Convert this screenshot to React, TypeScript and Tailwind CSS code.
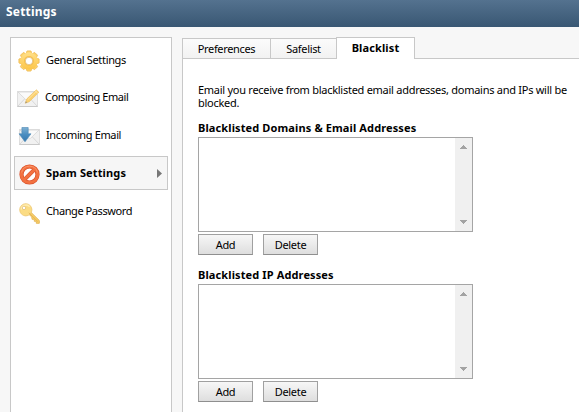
import type { ReactNode } from "react";

function GearIcon() {
  const teeth = [0, 45, 90, 135, 180, 225, 270, 315];
  return (
    <svg width="22" height="22" viewBox="0 0 22 22">
      <defs>
        <linearGradient id="gear" x1="0" y1="0" x2="0" y2="1">
          <stop offset="0" stopColor="#ffe08a" />
          <stop offset="1" stopColor="#fcc548" />
        </linearGradient>
      </defs>
      <g fill="#fcd168" stroke="#efbb58" strokeWidth="0.8" strokeLinejoin="round">
        {teeth.map((a) => (
          <path key={a} d="M8.2 4 8.8 1.3q.1-.4.5-.4h3.4q.4 0 .5.4L13.8 4z" transform={`rotate(${a} 11 11)`} />
        ))}
      </g>
      <circle cx="11" cy="11" r="8.7" fill="url(#gear)" />
      <circle cx="11" cy="11" r="5" fill="#f9c14c" />
      <circle cx="11" cy="11" r="3.7" fill="#fff" stroke="#d9b26a" strokeWidth="0.6" />
    </svg>
  );
}

function Envelope() {
  return (
    <g>
      <rect x=".5" y="2.5" width="20" height="15" fill="#f1f1f1" stroke="#dedede" />
      <path d="M1 17 8 9.5M20 17l-7-7.5" stroke="#d8d8d8" fill="none" />
      <path d="M1 3h19l-8.3 8.2q-1.2 1-2.4 0z" fill="#fafafa" stroke="#d6d6d6" strokeWidth=".8" />
      <path d="M.5 17.5h20" stroke="#c9c9c9" />
    </g>
  );
}

function ComposeIcon() {
  return (
    <svg width="23" height="19" viewBox="0 0 23 19">
      <Envelope />
      <path d="m8.2 14.3 1.4-4.2L19.3.8l2.6 2.5-9.6 9.4z" fill="#fad06f" stroke="#ecbd62" strokeWidth=".6" />
      <path d="m10.7 10.7 8.8-8.5" stroke="#ffe5a4" />
      <path d="m8.2 14.3.7-2.1 1.3 1.4z" fill="#9a9283" />
      <path d="m18.2 1.8 2.6 2.5" stroke="#fff1c6" strokeWidth=".8" />
    </svg>
  );
}

function IncomingIcon() {
  return (
    <svg width="22" height="19" viewBox="0 0 22 19">
      <defs>
        <linearGradient id="arrow" x1="0" y1="0" x2="0" y2="1">
          <stop offset="0" stopColor="#7db0d3" />
          <stop offset=".5" stopColor="#4a8dc0" />
          <stop offset="1" stopColor="#3578ae" />
        </linearGradient>
      </defs>
      <g transform="translate(1 0)">
        <Envelope />
      </g>
      <path d="M3.9.5h6.3v6.3H13l-6 8-6-8h2.9z" fill="url(#arrow)" stroke="#4a86b4" strokeWidth=".6" />
    </svg>
  );
}

function BlockIcon() {
  return (
    <svg width="21" height="21" viewBox="0 0 21 21">
      <circle cx="10.5" cy="10.5" r="8" fill="#fff" stroke="#d9512c" strokeWidth="4.2" />
      <path d="m4.7 16.3 11.6-11.6" stroke="#d9512c" strokeWidth="4" />
      <circle cx="10.5" cy="10.5" r="8.1" fill="none" stroke="#f27140" strokeWidth="3" />
      <path d="m5 16 11-11" stroke="#f27140" strokeWidth="2.8" />
      <path d="M2.6 8.5a8.1 8.1 0 0 1 15.8 0" fill="none" stroke="#fb9468" strokeWidth="1" />
    </svg>
  );
}

function KeyIcon() {
  return (
    <svg width="21" height="21" viewBox="0 0 21 21">
      <path d="m10.1 7.5 10.2 10v2.8h-3v-2h-2v-2h-2.2l-.3-2.3-4-3.7z" fill="#f9cf68" stroke="#e3b556" strokeWidth=".9" />
      <circle cx="6.8" cy="6.8" r="6.1" fill="#fbdc84" stroke="#edc670" strokeWidth=".8" />
      <path d="M2.2 6.5a4.8 4.8 0 0 1 8.5-2.7" fill="none" stroke="#ffedb1" strokeWidth="1.4" />
      <circle cx="5" cy="4.9" r="1.7" fill="#fff" stroke="#dcb970" strokeWidth=".7" />
      <path d="m9.8 9.8 9 8.7" stroke="#dfab48" strokeWidth=".7" />
    </svg>
  );
}

type Item = { label: string; icon: ReactNode; iconPad: string; textStyle: string; selected?: boolean };

const items: Item[] = [
  { label: "General Settings", icon: <GearIcon />, iconPad: "pl-[3px] pt-[7px]", textStyle: "pt-[9px]" },
  { label: "Composing Email", icon: <ComposeIcon />, iconPad: "pl-[2px] pt-[8px]", textStyle: "-ml-px pt-[8px] tracking-[-0.45px]" },
  { label: "Incoming Email", icon: <IncomingIcon />, iconPad: "pl-[3px] pt-[8px]", textStyle: "pt-[8px] tracking-[-0.37px]" },
  {
    label: "Spam Settings",
    icon: <BlockIcon />,
    iconPad: "pl-[4px] pt-[7px]",
    textStyle: "pt-[8px] font-bold tracking-[0.14px]",
    selected: true,
  },
  { label: "Change Password", icon: <KeyIcon />, iconPad: "pl-[4px] pt-[8px]", textStyle: "pt-[8px] tracking-[-0.42px]" },
];

function NavItem({ item }: { item: Item }) {
  return (
    <li className={`flex h-[34px] border ${item.selected ? "border-[#c8c8c8] bg-[#f6f6f6]" : "border-transparent"}`}>
      <span className={`w-[31px] shrink-0 ${item.iconPad}`}>{item.icon}</span>
      <span className={`grow whitespace-nowrap leading-[16px] ${item.textStyle}`}>{item.label}</span>
      {item.selected && (
        <svg className="mr-[5px] mt-[12px]" width="5" height="9" viewBox="0 0 5 9">
          <path d="M0 0v9l5-4.5z" fill="#777" />
        </svg>
      )}
    </li>
  );
}

function ListBox() {
  return (
    <div className="flex h-[95px] w-[275px] justify-end border border-[#a5a5a5] bg-white">
      <div className="flex w-[17px] flex-col items-center justify-between bg-[#f0f0f0] py-[7px]">
        <svg width="7" height="4" viewBox="0 0 7 4" shapeRendering="crispEdges">
          <path d="M3 0h1v1h1v1h1v1h1v1H0V3h1V2h1V1h1z" fill="#a3a3a3" />
        </svg>
        <svg width="7" height="4" viewBox="0 0 7 4" shapeRendering="crispEdges">
          <path d="M0 0h7v1H6v1H5v1H4v1H3V3H2V2H1V1H0z" fill="#a3a3a3" />
        </svg>
      </div>
    </div>
  );
}

function Button({ children }: { children: ReactNode }) {
  return (
    <button className="flex h-[21px] w-[55px] items-center justify-center border border-[#a0a0a0] border-b-[#8f8f8f] bg-linear-to-b from-[#f7f7f7] to-[#dedede] leading-[16px] tracking-[-0.3px]">
      {children}
    </button>
  );
}

function Section({ title }: { title: string }) {
  return (
    <section>
      <h2 className="h-[17px] whitespace-nowrap font-bold leading-[16px] tracking-[0.12px]">{title}</h2>
      <ListBox />
      <div className="mt-[2px] flex gap-[10px]">
        <Button>Add</Button>
        <Button>Delete</Button>
      </div>
    </section>
  );
}

export default function App() {
  return (
    <div className="flex h-[412px] w-[579px] flex-col overflow-hidden bg-[#f7f7f7] font-['Noto_Sans','Open_Sans',sans-serif] text-[11px] tracking-[-0.33px] text-black">
      <header className="h-[27px] shrink-0 bg-linear-to-b from-[#54728f] to-[#395773] pl-[6px] pt-[3px] text-[12px] font-bold leading-[17px] tracking-[0.2px] text-white">
        Settings
      </header>
      <div className="flex grow pl-[10px] pt-[10px]">
        <nav className="w-[162px] shrink-0 border border-b-0 border-[#c8c8c8] bg-white">
          <ul className="flex flex-col gap-[4px] px-[3px] pt-[4px]">
            {items.map((item) => (
              <NavItem key={item.label} item={item} />
            ))}
          </ul>
        </nav>
        <main className="ml-[10px] flex min-w-0 grow flex-col">
          <div className="flex h-[21px] items-end">
            <div className="flex h-[20px] w-[88px] justify-center border border-r-0 border-b-0 border-[#c8c8c8] bg-linear-to-b from-[#fbfbfb] to-[#f2f2f2] pt-[2px] leading-[16px]">
              Preferences
            </div>
            <div className="flex h-[20px] w-[66px] justify-center border border-r-0 border-b-0 border-[#c8c8c8] bg-linear-to-b from-[#fbfbfb] to-[#f2f2f2] pt-[2px] leading-[16px]">
              Safelist
            </div>
            <div className="flex h-[21px] w-[79px] justify-center border border-b-0 border-[#c8c8c8] bg-white pt-[2px] font-bold leading-[16px] tracking-[0.12px]">
              Blacklist
            </div>
          </div>
          <div className="flex h-px shrink-0">
            <div className="w-[155px] bg-[#c8c8c8]" />
            <div className="w-[77px] bg-white" />
            <div className="grow bg-[#c8c8c8]" />
          </div>
          <div className="grow border-l border-[#c8c8c8] bg-white pl-[15px] pt-[24px]">
            <p className="h-[37px] w-[378px] leading-[13px] tracking-[-0.27px]">
              Email you receive from blacklisted email addresses, domains and IPs will be blocked.
            </p>
            <div className="flex flex-col gap-[12px]">
              <Section title="Blacklisted Domains & Email Addresses" />
              <Section title="Blacklisted IP Addresses" />
            </div>
          </div>
        </main>
      </div>
    </div>
  );
}
